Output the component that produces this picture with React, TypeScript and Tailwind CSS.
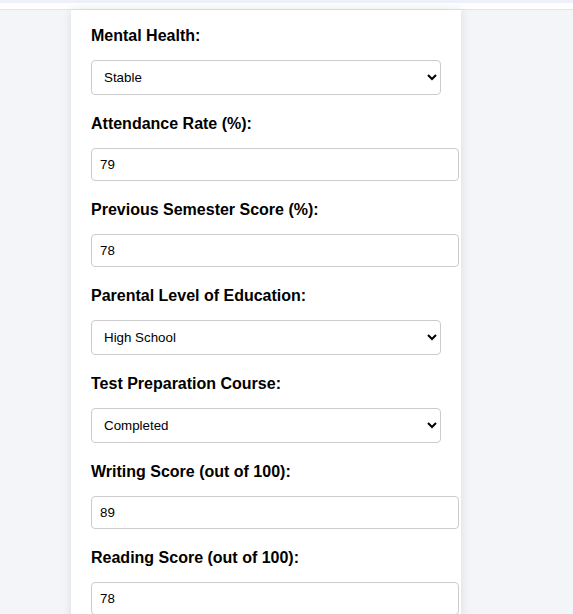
import React from "react";

type Field =
  | { kind: "select"; label: string; value: string; options: string[] }
  | { kind: "input"; label: string; value: string };

const fields: Field[] = [
  {
    kind: "select",
    label: "Mental Health:",
    value: "Stable",
    options: ["Stable", "Moderate", "Poor"],
  },
  { kind: "input", label: "Attendance Rate (%):", value: "79" },
  { kind: "input", label: "Previous Semester Score (%):", value: "78" },
  {
    kind: "select",
    label: "Parental Level of Education:",
    value: "High School",
    options: ["High School", "Bachelor's", "Master's", "PhD"],
  },
  {
    kind: "select",
    label: "Test Preparation Course:",
    value: "Completed",
    options: ["Completed", "None"],
  },
  { kind: "input", label: "Writing Score (out of 100):", value: "89" },
  { kind: "input", label: "Reading Score (out of 100):", value: "78" },
];

export default function App() {
  return (
    <div className="min-h-screen bg-[#f4f5f9] font-['Liberation_Sans',Arial,sans-serif] text-black">
      <div className="h-[3px] bg-[#eef1f9]" />
      <div className="h-[7px] bg-white border-b border-[#e4e4e4]" />

      <form className="ml-[71px] w-[390px] bg-white px-5 pt-4 pb-5 shadow-[0_0_10px_rgba(0,0,0,0.1)]">
        {fields.map((f) => (
          <div key={f.label}>
            <label className="block text-[16px] font-bold leading-[20px] mb-[14px]">
              {f.label}
            </label>
            {f.kind === "select" ? (
              <select
                defaultValue={f.value}
                className="block w-full h-[35px] px-2 mb-[19px] text-[13.333px] border border-[#ccc] rounded bg-white text-black"
              >
                {f.options.map((o) => (
                  <option key={o}>{o}</option>
                ))}
              </select>
            ) : (
              <input
                type="number"
                defaultValue={f.value}
                className="block box-content w-full h-[15px] p-2 mb-[19px] text-[13.333px] leading-[15px] border border-[#ccc] rounded bg-white text-black [appearance:textfield]"
              />
            )}
          </div>
        ))}
      </form>
    </div>
  );
}
